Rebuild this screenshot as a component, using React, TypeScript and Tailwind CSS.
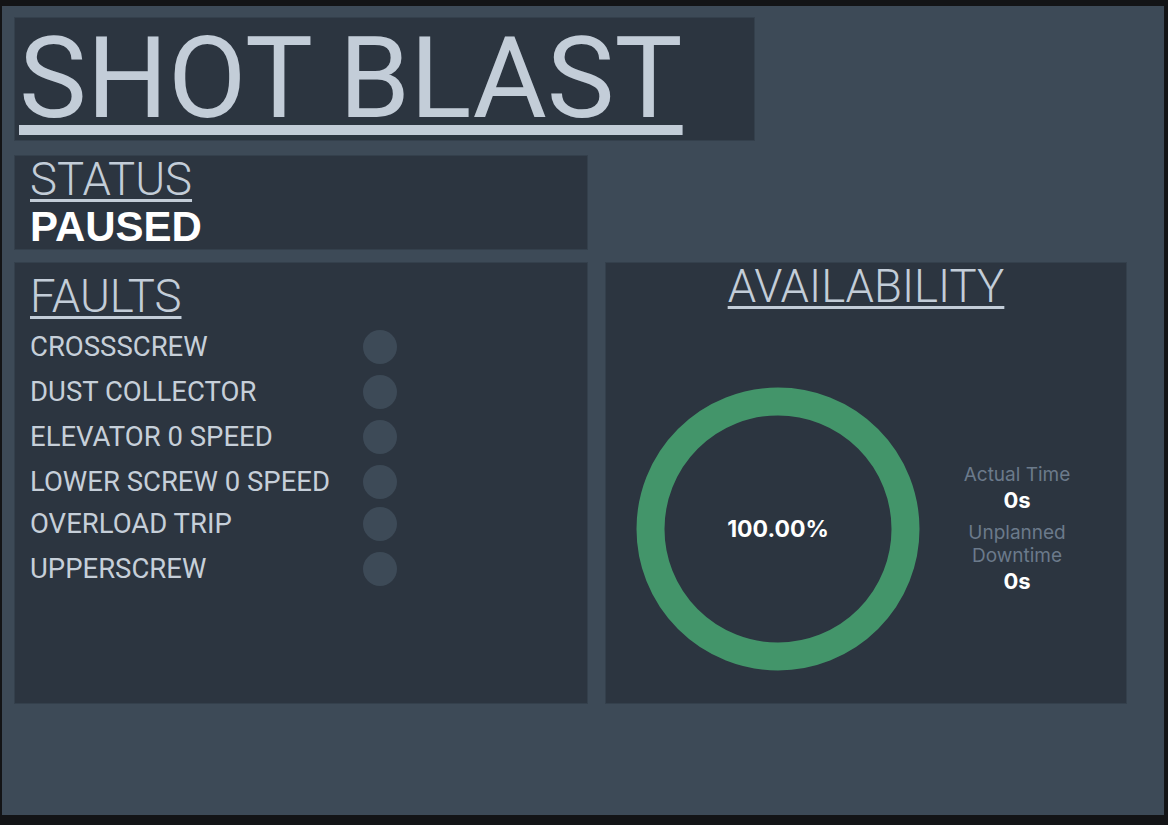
const FAULTS = [
  { name: 'CROSSSCREW', mt: 'mt-[11px]' },
  { name: 'DUST COLLECTOR', mt: 'mt-[11px]' },
  { name: 'ELEVATOR 0 SPEED', mt: 'mt-[11px]' },
  { name: 'LOWER SCREW 0 SPEED', mt: 'mt-[11px]' },
  { name: 'OVERLOAD TRIP', mt: 'mt-[8px]' },
  { name: 'UPPERSCREW', mt: 'mt-[11px]' },
]

function Donut({ value }: { value: number }) {
  const r = 127.5
  const c = 2 * Math.PI * r
  return (
    <div className="relative h-[284px] w-[284px]">
      <svg width="284" height="284" viewBox="0 0 284 284">
        <circle
          cx="142"
          cy="142"
          r={r}
          fill="none"
          stroke="#43956a"
          strokeWidth="28"
          strokeDasharray={`${(c * value) / 100} ${c}`}
          transform="rotate(-90 142 142)"
        />
      </svg>
      <div className="absolute inset-0 flex items-center justify-center font-['Inter',sans-serif] text-[23px] font-bold text-white">
        {value.toFixed(2)}%
      </div>
    </div>
  )
}

export default function App() {
  return (
    <div className="h-[825px] w-[1168px] bg-[#131416] pl-[2px] pr-[4px] pt-[6px] font-['Roboto',sans-serif]">
      <div className="h-[809px] bg-[#3d4a57] px-[12px] pt-[11px]">
        <div className="w-[741px] h-[124px] border border-[#34404c] bg-[#2c3540] pl-[4px] pt-[4px]">
          <h1 className="text-[114px] leading-[112px] font-normal text-[#c3cdd8] underline decoration-[10px] underline-offset-[8px]">
            SHOT BLAST
          </h1>
        </div>

        <div className="mt-[14px] w-[574px] h-[95px] border border-[#34404c] bg-[#2c3540] pl-[15px] pt-[2px]">
          <h2 className="text-[45.5px] leading-[44px] font-light text-[#c3cdd8] underline decoration-[3px] underline-offset-[4px]">
            STATUS
          </h2>
          <div className="mt-[2px] font-['Liberation_Sans',sans-serif] text-[42px] leading-[46px] font-bold text-white">
            PAUSED
          </div>
        </div>

        <div className="mt-[12px] flex gap-[17px]">
          <div className="w-[574px] h-[442px] border border-[#34404c] bg-[#2c3540] pl-[15px] pt-[12px]">
            <h2 className="text-[45.5px] leading-[44px] font-light text-[#c3cdd8] underline decoration-[3px] underline-offset-[4px]">
              FAULTS
            </h2>
            {FAULTS.map((f) => (
              <div key={f.name} className={`${f.mt} flex items-center`}>
                <span className="w-[333px] text-[27.5px] leading-[34px] text-[#c6cfd9]">{f.name}</span>
                <span className="h-[34px] w-[34px] rounded-full bg-[#3d4a57]" />
              </div>
            ))}
          </div>

          <div className="w-[522px] h-[442px] border border-[#34404c] bg-[#2c3540] pt-[2px]">
            <h2 className="text-center text-[45.5px] leading-[44px] font-light text-[#c3cdd8] underline decoration-[3px] underline-offset-[4px]">
              AVAILABILITY
            </h2>
            <div className="mt-[78px] flex items-center pl-[30px] font-['Inter',sans-serif]">
              <Donut value={100} />
              <div className="ml-[21px] w-[152px] text-center">
                <div className="text-[19px] leading-[23px] text-[#6b7a8b]">Actual Time</div>
                <div className="text-[22px] leading-[29px] font-bold text-white">0s</div>
                <div className="mt-[6px] text-[19px] leading-[23px] text-[#6b7a8b]">Unplanned Downtime</div>
                <div className="text-[22px] leading-[29px] font-bold text-white">0s</div>
              </div>
            </div>
          </div>
        </div>
      </div>
    </div>
  )
}
